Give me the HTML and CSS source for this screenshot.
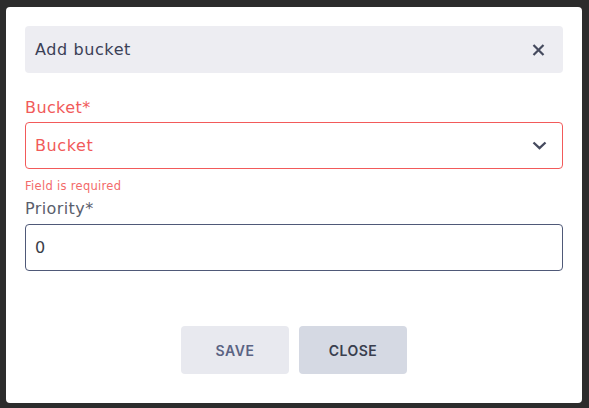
FILE: index.html
```html
<!DOCTYPE html>
<html lang="en">
<head>
<meta charset="utf-8">
<title>Add bucket</title>
<link rel="stylesheet" href="styles.css">
</head>
<body>
<div class="modal">
  <div class="modal-header">
    <span class="modal-title">Add bucket</span>
    <svg class="close-icon" width="13" height="12" viewBox="0 0 13 12"><path d="M1.5 1 L11.5 11 M11.5 1 L1.5 11" stroke="#454a5e" stroke-width="2.2" stroke-linecap="butt" fill="none"/></svg>
  </div>
  <label class="field-label field-label--error">Bucket*</label>
  <div class="select select--error">
    <span class="select-placeholder">Bucket</span>
    <svg class="chevron" width="15" height="9" viewBox="0 0 15 9"><path d="M1.5 1.5 L7.5 7.2 L13.5 1.5" stroke="#454a5e" stroke-width="2.3" fill="none"/></svg>
  </div>
  <div class="field-error">Field is required</div>
  <label class="field-label field-label--priority">Priority*</label>
  <div class="input"><span class="input-value">0</span></div>
  <div class="actions">
    <button class="btn btn-save">SAVE</button>
    <button class="btn btn-close">CLOSE</button>
  </div>
</div>
</body>
</html>
```
FILE: styles.css
```css
html, body {
  margin: 0;
  padding: 0;
  background: #2c2c2c;
  width: 589px;
  height: 408px;
  overflow: hidden;
  font-family: "DejaVu Sans", "Open Sans", sans-serif;
}

.modal {
  margin: 7px 7px 0 6px;
  width: 538px;
  height: 358px;
  padding: 19px;
  background: #ffffff;
  border-radius: 4px;
  display: flex;
  flex-direction: column;
}

.modal-header {
  height: 47px;
  flex: none;
  background: #ededf2;
  border-radius: 4px;
  display: flex;
  align-items: center;
  justify-content: space-between;
  padding: 0 18px 0 10px;
}

.modal-title {
  font-size: 16px;
  color: #3b4056;
  letter-spacing: 0.6px;
}

.close-icon {
  display: block;
}

.field-label {
  display: block;
  font-size: 16px;
  line-height: 22px;
  letter-spacing: 0.4px;
}

.field-label--error {
  margin-top: 24px;
  margin-bottom: 3px;
  color: #f15a5a;
}

.field-label--priority {
  margin-top: 4px;
  margin-bottom: 4px;
  color: #5a5e6c;
}

.select,
.input {
  height: 47px;
  flex: none;
  box-sizing: border-box;
  border-radius: 4px;
  display: flex;
  align-items: center;
  justify-content: space-between;
  padding: 0 15px 0 9px;
}

.select--error {
  border: 1px solid #f25a5a;
}

.select-placeholder {
  font-size: 16px;
  color: #f15a5a;
  letter-spacing: 0.6px;
}

.chevron {
  display: block;
}

.field-error {
  margin-top: 9px;
  font-size: 11.5px;
  line-height: 16px;
  letter-spacing: 0.3px;
  color: #f36a6a;
}

.input {
  border: 1px solid #4f5978;
}

.input-value {
  font-size: 16px;
  color: #3a3d48;
}

.actions {
  margin-top: 55px;
  display: flex;
  justify-content: center;
  gap: 10px;
}

.btn {
  width: 108px;
  height: 48px;
  border: none;
  border-radius: 4px;
  font-family: Inter, "DejaVu Sans", sans-serif;
  font-weight: 600;
  font-size: 14px;
  letter-spacing: 0.5px;
  padding: 0;
}

.btn-save {
  background: #e8e9ef;
  color: #5a6383;
}

.btn-close {
  background: #d5d9e3;
  color: #393e4e;
}
```
